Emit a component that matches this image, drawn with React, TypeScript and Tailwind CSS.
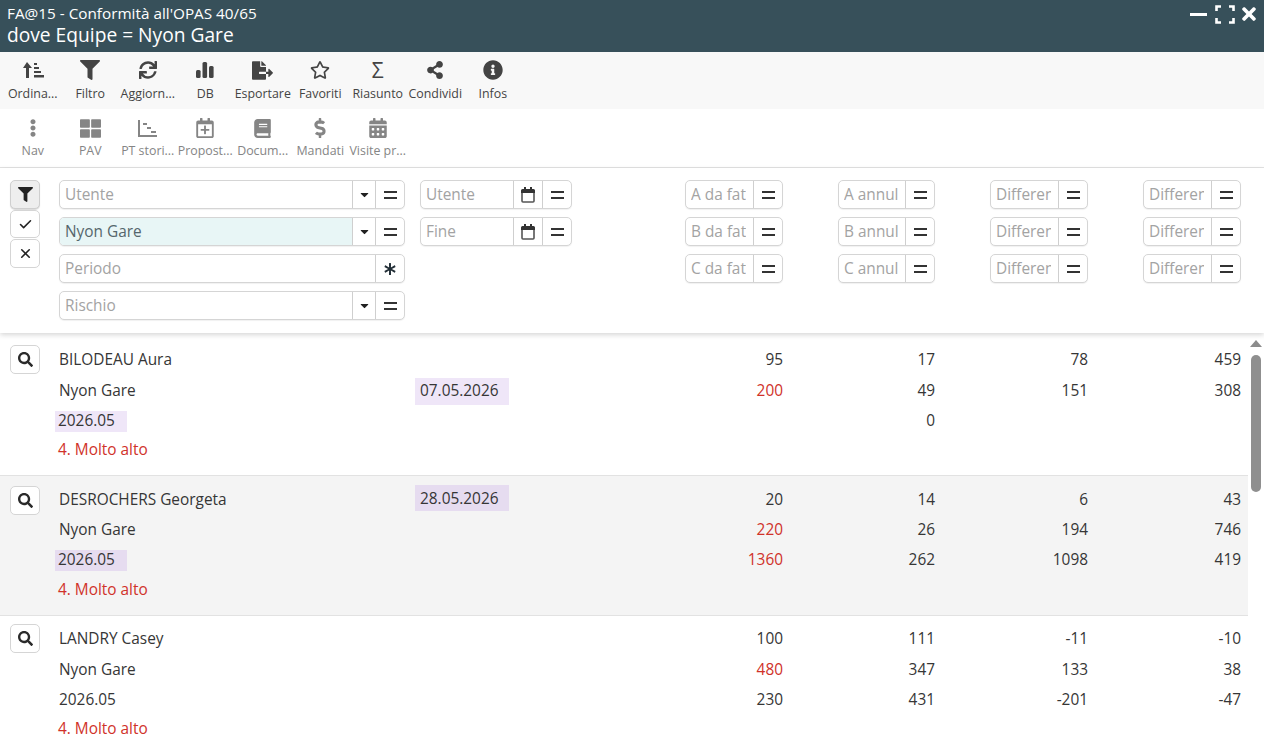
import React from "react";
import { FaFilter, FaSync, FaFileExport, FaRegStar, FaShareAlt, FaInfoCircle, FaEllipsisV, FaThLarge, FaRegCalendarPlus, FaBook, FaDollarSign, FaCalendarAlt, FaTimes, FaSearch, FaCaretDown, FaAsterisk } from "react-icons/fa";
import { Check, X } from "lucide-react";

const SortIcon = () => (
  <svg width="22" height="20" viewBox="0 0 22 20" fill="currentColor">
    <path d="M5 2 L10 8 H7 V18 H4 V8 H1 Z" />
    <rect x="12" y="3" width="3" height="2" />
    <rect x="12" y="7" width="5" height="2" />
    <rect x="12" y="11" width="7" height="2" />
    <rect x="12" y="15" width="10" height="2.5" />
  </svg>
);
const BarsIcon = () => (
  <svg width="18" height="16" viewBox="0 0 18 16" fill="currentColor">
    <rect x="0" y="8" width="4.6" height="8" rx="1.5" />
    <rect x="6.5" y="0" width="4.6" height="16" rx="1.5" />
    <rect x="13" y="4" width="4.6" height="12" rx="1.5" />
  </svg>
);
const PtIcon = () => (
  <svg width="21" height="19" viewBox="0 0 21 19" fill="none" stroke="currentColor" strokeWidth="2">
    <path d="M2 1 V17 H20" />
    <path d="M6 5 H10 M10 9 H14 M14 13 H19" />
  </svg>
);
const CalIcon = () => (
  <svg width="14" height="16" viewBox="0 0 14 16">
    <path d="M3 0 H5 V2 H9 V0 H11 V2 H12.5 A1.5 1.5 0 0 1 14 3.5 V6 H0 V3.5 A1.5 1.5 0 0 1 1.5 2 H3 Z" fill="#333333" />
    <path d="M1 6 V14 A1 1 0 0 0 2 15 H12 A1 1 0 0 0 13 14 V6" fill="none" stroke="#555555" strokeWidth="1.6" />
  </svg>
);

const ToolItem = ({ icon, label, sub }: { icon: React.ReactNode; label: string; sub?: boolean }) => (
  <div className={`flex w-[57.5px] shrink-0 flex-col items-center overflow-visible whitespace-nowrap ${sub ? "text-[#858585]" : "text-[#444444]"}`}>
    <div className="flex h-[24px] items-center justify-center">{icon}</div>
    <div className={`text-[12.4px] leading-[16px] ${sub ? "mt-[3px]" : "mt-[4px]"}`}>{label}</div>
  </div>
);

const Addon = ({ children, w }: { children: React.ReactNode; w: string }) => (
  <div className={`flex shrink-0 items-center justify-center border-l border-[#cfcfcf] text-[#222222] ${w}`}>{children}</div>
);
const Eq = () => (
  <Addon w="w-[29px]">
    <div className="flex flex-col gap-[4px]">
      <div className="h-[2px] w-[13px] bg-[#333333]" />
      <div className="h-[2px] w-[13px] bg-[#333333]" />
    </div>
  </Addon>
);
const Caret = () => (
  <Addon w="w-[23px]">
    <FaCaretDown size={13} />
  </Addon>
);
const Cal = () => (
  <Addon w="w-[29px]">
    <CalIcon />
  </Addon>
);

const Field = ({ text, value, fill, children, w }: { text: string; value?: boolean; fill?: boolean; children: React.ReactNode; w: string }) => (
  <div className={`flex h-[29px] overflow-hidden rounded-[5px] border border-[#d5d5d5] bg-white shadow-[0_1px_1px_rgba(0,0,0,0.06)] ${w}`}>
    <div className={`min-w-0 flex-1 pl-[5px] pr-[7px] text-[15.4px] leading-[28px] ${value ? "text-[#55666c]" : "text-[#a3a3a3]"} ${fill ? "bg-[#e8f6f6]" : ""}`}>
      <div className="overflow-hidden whitespace-nowrap">{text}</div>
    </div>
    {children}
  </div>
);

const SmallCol = ({ items, ml, w }: { items: string[]; ml: string; w: string }) => (
  <div className={`flex flex-col gap-[8px] ${ml}`}>
    {items.map((t, i) => (
      <Field key={i} text={t} w={w}>
        <Eq />
      </Field>
    ))}
  </div>
);

const rows = [
  {
    name: "BILODEAU Aura", date1: "", date2: "07.05.2026", hl: true, cls: "pt-[11px] bg-white", gr: "grid-rows-[31px_32px_28px_30px]",
    nums: [["95", "17", "78", "459"], ["200", "49", "151", "308"], ["", "0", "", ""], ["", "", "", ""]],
    red: [[1, 0]],
  },
  {
    name: "DESROCHERS Georgeta", date1: "28.05.2026", date2: "", hl: true, cls: "pt-[9px] bg-[#f4f4f4]", gr: "grid-rows-[30px_30px_30px_30px]",
    nums: [["20", "14", "6", "43"], ["220", "26", "194", "746"], ["1360", "262", "1098", "419"], ["", "", "", ""]],
    red: [[1, 0], [2, 0]],
  },
  {
    name: "LANDRY Casey", date1: "", date2: "", hl: false, cls: "pt-[7px] bg-white", gr: "grid-rows-[31px_32px_28px_30px]",
    nums: [["100", "111", "-11", "-10"], ["480", "347", "133", "38"], ["230", "431", "-201", "-47"], ["", "", "", ""]],
    red: [[1, 0]],
  },
];

const Row = ({ r }: { r: (typeof rows)[number] }) => {
  const shaded = r.cls.includes("f4f4f4");
  const hlBg = shaded ? "bg-[#e6dcf0]" : "bg-[#efe6f8]";
  const isRed = (i: number, j: number) => r.red.some(([a, b]) => a === i && b === j);
  const numCells = (i: number) =>
    r.nums[i].map((n, j) => (
      <div key={j} className={`flex h-full items-center justify-end ${isRed(i, j) ? "text-[#d0322a]" : ""}`}>{n}</div>
    ));
  return (
    <div className={`border-b border-[#e2e2e2] ${r.cls}`}>
      <div className={`grid grid-cols-[59px_356px_94px_274px_152px_153px_153px] pb-[10px] pr-[7px] text-[15.4px] text-[#363636] ${r.gr}`}>
        <div className="flex h-full items-center pl-[10px]">
          <div className="flex h-[29px] w-[30px] items-center justify-center rounded-[5px] border border-[#d5d5d5] bg-white">
            <FaSearch size={15} className="text-[#2a2a2a]" />
          </div>
        </div>
        <div className="flex h-full items-center">{r.name}</div>
        {r.date1 ? (
          <div className={`flex h-[26px] w-[94px] items-center pl-[5px] pt-[2px] ${hlBg}`}>{r.date1}</div>
        ) : (
          <div />
        )}
        {numCells(0)}
        <div />
        <div className="flex h-full items-center">Nyon Gare</div>
        {r.date2 ? (
          <div className="flex h-full items-center">
            <div className={`flex h-[27px] w-[94px] items-center pl-[5px] ${hlBg}`}>{r.date2}</div>
          </div>
        ) : (
          <div />
        )}
        {numCells(1)}
        <div />
        <div className="flex h-full items-center">
          {r.hl ? (
            <div className={`-ml-[4px] flex h-[21px] w-[72px] items-center pl-[3px] ${hlBg}`}>2026.05</div>
          ) : (
            "2026.05"
          )}
        </div>
        <div />
        {numCells(2)}
        <div />
        <div className="-ml-[1px] flex h-full items-center text-[#d0322a]">4. Molto alto</div>
        <div />
        {numCells(3)}
      </div>
    </div>
  );
};

export default function App() {
  return (
    <div className="flex h-[753px] w-[1264px] flex-col overflow-hidden bg-white font-['Open_Sans',sans-serif]">
      <header className="flex h-[52px] shrink-0 items-start justify-between bg-[#37505a] pl-[7px] pr-[5px] text-white">
        <div className="pt-[3px]">
          <div className="text-[15.3px] leading-[20px]">FA@15 - Conformità all'OPAS 40/65</div>
          <div className="text-[19.2px] leading-[23px]">dove Equipe = Nyon Gare</div>
        </div>
        <div className="flex items-center pt-[4px]">
          <div className="h-[3px] w-[17px] bg-white" />
          <svg className="ml-[8px]" width="20" height="19" viewBox="0 0 20 19" fill="none" stroke="white" strokeWidth="2.6">
            <path d="M6 1.5 H1.5 V6 M14 1.5 H18.5 V6 M6 17.5 H1.5 V13 M14 17.5 H18.5 V13" />
          </svg>
          <FaTimes className="ml-[4px]" size={20} />
        </div>
      </header>

      <div className="flex h-[57px] shrink-0 items-start bg-[#f8f8f8] pl-[4px] pt-[6px]">
        <ToolItem icon={<SortIcon />} label="Ordina..." />
        <ToolItem icon={<FaFilter size={20} />} label="Filtro" />
        <ToolItem icon={<FaSync size={18} />} label="Aggiorn..." />
        <ToolItem icon={<BarsIcon />} label="DB" />
        <ToolItem icon={<FaFileExport size={21} />} label="Esportare" />
        <ToolItem icon={<FaRegStar size={20} />} label="Favoriti" />
        <ToolItem icon={<span className="text-[21px] leading-none">Σ</span>} label="Riasunto" />
        <ToolItem icon={<FaShareAlt size={18} />} label="Condividi" />
        <ToolItem icon={<FaInfoCircle size={20} />} label="Infos" />
      </div>

      <div className="flex h-[59px] shrink-0 items-start border-b border-[#e3e3e3] bg-white pl-[4px] pt-[7px]">
        <ToolItem sub icon={<FaEllipsisV size={18} />} label="Nav" />
        <ToolItem sub icon={<FaThLarge size={21} />} label="PAV" />
        <ToolItem sub icon={<PtIcon />} label="PT stori..." />
        <ToolItem sub icon={<FaRegCalendarPlus size={20} />} label="Propost..." />
        <ToolItem sub icon={<FaBook size={19} />} label="Docum..." />
        <ToolItem sub icon={<FaDollarSign size={20} />} label="Mandati" />
        <ToolItem sub icon={<FaCalendarAlt size={20} />} label="Visite pr..." />
      </div>

      <div className="relative z-10 flex h-[165px] shrink-0 items-start bg-white pl-[10px] pt-[12px] shadow-[0_2px_5px_rgba(0,0,0,0.16)]">
        <div className="flex w-[30px] flex-col gap-[1px]">
          <div className="flex h-[29px] items-center justify-center rounded-[5px] border border-[#cfcfcf] bg-[#eeeeee] shadow-[0_1px_1px_rgba(0,0,0,0.15)]">
            <FaFilter size={15} className="text-[#222222]" />
          </div>
          <div className="flex h-[28px] items-center justify-center rounded-[5px] border border-[#d5d5d5]">
            <Check size={15} strokeWidth={2.5} className="text-[#222222]" />
          </div>
          <div className="flex h-[29px] items-center justify-center rounded-[5px] border border-[#d5d5d5]">
            <X size={15} strokeWidth={2.5} className="text-[#222222]" />
          </div>
        </div>
        <div className="ml-[19px] flex flex-col gap-[8px]">
          <Field text="Utente" w="w-[346px]"><Caret /><Eq /></Field>
          <Field text="Nyon Gare" value fill w="w-[346px]"><Caret /><Eq /></Field>
          <Field text="Periodo" w="w-[346px]">
            <Addon w="w-[29px]"><FaAsterisk size={12} className="text-[#243038]" /></Addon>
          </Field>
          <Field text="Rischio" w="w-[346px]"><Caret /><Eq /></Field>
        </div>
        <div className="ml-[15px] flex flex-col gap-[8px]">
          <Field text="Utente" w="w-[152px]"><Cal /><Eq /></Field>
          <Field text="Fine" w="w-[152px]"><Cal /><Eq /></Field>
        </div>
        <SmallCol ml="ml-[113px]" w="w-[98px]" items={["A da fatturare", "B da fatturare", "C da fatturare"]} />
        <SmallCol ml="ml-[55px]" w="w-[97px]" items={["A annullati", "B annullati", "C annullati"]} />
        <SmallCol ml="ml-[55px]" w="w-[98px]" items={["Differenza", "Differenza", "Differenza"]} />
        <SmallCol ml="ml-[55px]" w="w-[98px]" items={["Differenza", "Differenza", "Differenza"]} />
      </div>

      <div className="flex min-h-0 flex-1">
        <div className="w-[1248px] shrink-0 overflow-hidden">
          {rows.map((r) => (
            <Row key={r.name} r={r} />
          ))}
        </div>
        <div className="flex w-[16px] flex-col items-center pt-[7px]">
          <div className="h-0 w-0 border-x-[6px] border-b-[7px] border-x-transparent border-b-[#8c8c8c]" />
          <div className="mt-[8px] h-[137px] w-[10px] rounded-[5px] bg-[#8f8f8f]" />
        </div>
      </div>
    </div>
  );
}
